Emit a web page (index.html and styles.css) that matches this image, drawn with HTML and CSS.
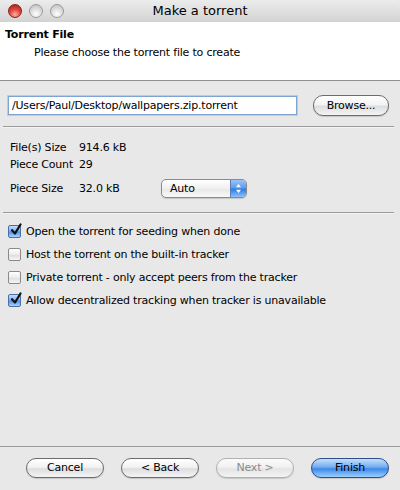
FILE: index.html
```html
<!DOCTYPE html>
<html>
<head>
<meta charset="utf-8">
<link rel="stylesheet" href="styles.css">
</head>
<body>
<div class="window">
  <div class="titlebar">
    <div class="lights">
      <span class="light red"></span>
      <span class="light"></span>
      <span class="light"></span>
    </div>
    <div class="title">Make a torrent</div>
  </div>
  <div class="header">
    <div class="h-title">Torrent File</div>
    <div class="h-sub">Please choose the torrent file to create</div>
  </div>
  <div class="content">
    <div class="file-row">
      <div class="field">/Users/Paul/Desktop/wallpapers.zip.torrent</div>
      <div class="btn browse">Browse...</div>
    </div>
    <div class="sep"></div>
    <div class="info">
      <div class="info-row"><span class="lbl">File(s) Size</span><span>914.6 kB</span></div>
      <div class="info-row"><span class="lbl">Piece Count</span><span>29</span></div>
      <div class="info-row piece">
        <span class="lbl">Piece Size</span><span class="val">32.0 kB</span>
        <div class="popup"><span class="popup-text">Auto</span><span class="popup-arrows"><svg width="7" height="11" viewBox="0 0 7 11"><path d="M3.5 1 L6 4.2 L1 4.2 Z M3.5 10 L6 6.8 L1 6.8 Z" fill="#fff"/></svg></span></div>
      </div>
    </div>
    <div class="sep sep2"></div>
    <div class="checks">
      <div class="check-row"><span class="cb on"><svg width="14" height="14" viewBox="0 0 14 14"><path d="M3 7.2 L6 10.5 L11.5 1.5" fill="none" stroke="#111" stroke-width="2.2" stroke-linecap="round" stroke-linejoin="round"/></svg></span>Open the torrent for seeding when done</div>
      <div class="check-row"><span class="cb"></span>Host the torrent on the built-in tracker</div>
      <div class="check-row"><span class="cb"></span>Private torrent - only accept peers from the tracker</div>
      <div class="check-row"><span class="cb on"><svg width="14" height="14" viewBox="0 0 14 14"><path d="M3 7.2 L6 10.5 L11.5 1.5" fill="none" stroke="#111" stroke-width="2.2" stroke-linecap="round" stroke-linejoin="round"/></svg></span>Allow decentralized tracking when tracker is unavailable</div>
    </div>
  </div>
  <div class="footer">
    <div class="btn">Cancel</div>
    <div class="btn">&lt; Back</div>
    <div class="btn disabled">Next &gt;</div>
    <div class="btn default">Finish</div>
  </div>
</div>
</body>
</html>
```

FILE: styles.css
```css
html, body {
  margin: 0;
  padding: 0;
}
body {
  width: 400px;
  height: 490px;
  overflow: hidden;
  font-family: "DejaVu Sans", "Liberation Sans", sans-serif;
  font-size: 11px;
  letter-spacing: -0.2px;
  color: #000;
  background: #e8e8e8;
}
.window {
  width: 400px;
  height: 490px;
  display: flex;
  flex-direction: column;
  background: #e8e8e8;
}
.titlebar {
  height: 22px;
  flex: none;
  display: flex;
  align-items: center;
  background: linear-gradient(#ececec, #d3d3d3);
  border-radius: 5px 5px 0 0;
  position: relative;
}
.lights {
  display: flex;
  gap: 7px;
  padding-left: 8px;
}
.light {
  width: 14px;
  height: 14px;
  border-radius: 50%;
  box-sizing: border-box;
  border: 1px solid #9a9a9a;
  background: radial-gradient(circle at 50% 75%, #ffffff 0%, #e0e0e0 45%, #b8b8b8 100%);
}
.light.red {
  border-color: #8a1f1f;
  background: radial-gradient(circle at 50% 80%, #ffb0a8 0%, #e04b40 45%, #a51812 100%);
}
.title {
  position: absolute;
  left: 0;
  right: 0;
  top: 0;
  line-height: 22px;
  text-align: center;
  font-size: 13px;
  letter-spacing: 0;
  pointer-events: none;
}
.header {
  flex: none;
  background: #fff;
  border-bottom: 1px solid #8f8f8f;
  padding: 6px 0 0 5px;
  height: 52px;
}
.h-title {
  font-weight: bold;
  font-size: 11px;
  line-height: 14px;
}
.h-sub {
  padding-left: 29px;
  margin-top: 4px;
  line-height: 14px;
}
.content {
  flex: 1;
  padding: 13px 6px 0 3px;
}
.file-row {
  display: flex;
  align-items: center;
  padding-left: 5px;
  height: 22px;
}
.field {
  width: 289px;
  height: 19px;
  box-sizing: border-box;
  background: #fff;
  border: 1px solid #7fa3d3;
  box-shadow: 0 0 0 1px #b8cde9;
  padding-left: 3px;
  line-height: 17px;
  font-size: 11px;
}
.btn {
  width: 78px;
  height: 20px;
  box-sizing: border-box;
  border: 1px solid #6c6c6c;
  border-radius: 10px;
  background: linear-gradient(#ffffff 0%, #f3f3f3 45%, #dedede 55%, #f4f4f4 100%);
  text-align: center;
  line-height: 18px;
  font-size: 11px;
  box-shadow: 0 1px 1px rgba(0,0,0,0.15);
}
.browse {
  margin-left: 16px;
  width: 76px;
  height: 21px;
  line-height: 19px;
}
.sep {
  height: 1px;
  background: #9a9a9a;
  margin-top: 10px;
  border-bottom: 1px solid #f4f4f4;
}
.info {
  padding: 11px 0 0 7px;
}
.info-row {
  display: flex;
  align-items: center;
  height: 17px;
}
.lbl {
  width: 69px;
}
.piece {
  height: 23px;
  margin-top: 4px;
}
.val {
  width: 82px;
}
.popup {
  width: 86px;
  height: 19px;
  box-sizing: border-box;
  border: 1px solid #8a8a8a;
  border-radius: 5px;
  display: flex;
  overflow: hidden;
  background: linear-gradient(#ffffff, #f0f0f0 50%, #e6e6e6 51%, #fafafa);
  box-shadow: 0 1px 1px rgba(0,0,0,0.15);
}
.popup-text {
  flex: 1;
  padding-left: 8px;
  line-height: 17px;
}
.popup-arrows {
  width: 15px;
  display: flex;
  align-items: center;
  justify-content: center;
  background: linear-gradient(#9ec5f5 0%, #5c9ef0 45%, #2f7de8 55%, #8cc2fb 100%);
  border-left: 1px solid #5a7fb8;
}
.sep2 {
  margin-top: 12px;
}
.checks {
  padding: 6px 0 0 5px;
}
.check-row {
  display: flex;
  align-items: center;
  height: 23px;
}
.cb {
  width: 13px;
  height: 13px;
  box-sizing: border-box;
  border: 1px solid #8a8a8a;
  border-radius: 2px;
  background: linear-gradient(#ffffff, #ececec 50%, #dcdcdc 51%, #f6f6f6);
  margin-right: 5px;
  position: relative;
  flex: none;
}
.cb.on {
  border-color: #4a6fa8;
  background: linear-gradient(#c4dcf9 0%, #7fb2f0 45%, #4f92ea 55%, #a9d4fd 100%);
}
.cb svg {
  position: absolute;
  left: 0px;
  top: -3px;
}
.footer {
  flex: none;
  height: 44px;
  box-sizing: border-box;
  border-top: 1px solid #9a9a9a;
  display: flex;
  align-items: flex-start;
  padding: 11px 0 0 26px;
  gap: 17px;
}
.btn.disabled {
  color: #8a8a8a;
  border-color: #b0b0b0;
  background: linear-gradient(#fbfbfb 0%, #f1f1f1 45%, #e4e4e4 55%, #f3f3f3 100%);
}
.btn.default {
  border-color: #2b4f8a;
  background: linear-gradient(#c6dffb 0%, #74acf1 45%, #3d88ea 55%, #9ad0fc 100%);
}
```
